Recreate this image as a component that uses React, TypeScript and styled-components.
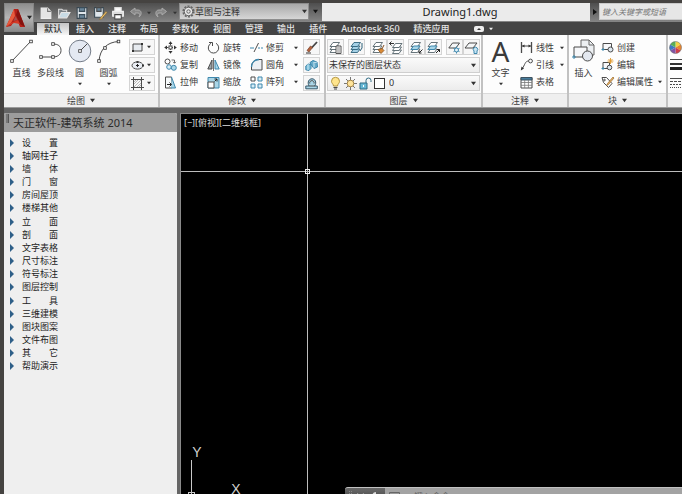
import React from "react";
import styled, { createGlobalStyle, css } from "styled-components";

const GlobalStyle = createGlobalStyle`
  * { box-sizing: border-box; }
  html, body { margin: 0; padding: 0; overflow: hidden; }
  body, button, input, select {
    font-family: "Noto Sans", "Noto Sans CJK SC", sans-serif;
    font-size: 9px;
    line-height: 12px;
    color: #3c3c3c;
  }
  button { border: 0; padding: 0; background: none; cursor: pointer; white-space: nowrap; }
  ul { list-style: none; margin: 0; padding: 0; }
  svg { display: block; flex: none; overflow: visible; }
`;

/* ---------- shell ---------- */

const Shell = styled.div`
  display: flex;
  flex-direction: column;
  height: 100vh;
  padding: 3px 0 0 4px;
  background: #454341;
`;

const Header = styled.header`
  display: flex;
  flex: none;
  background: #444;
`;

const AppButton = styled.button`
  display: flex;
  align-items: center;
  justify-content: center;
  gap: 2px;
  flex: none;
  width: 30px;
  height: 29px;
  background: linear-gradient(#8e8e8e, #b5b5b5 50%, #8b8b8b);
  border: 1px solid #858585;
`;

const HeaderRows = styled.div`
  flex: 1;
  min-width: 0;
`;

const TitleBar = styled.div`
  display: flex;
  height: 19px;
  background: linear-gradient(#4e4e4e, #858585);
`;

const QuickTools = styled.div`
  display: flex;
  align-items: center;
  gap: 4px;
  padding-left: 5px;
  width: 145px;
`;

const QuickButton = styled.button`
  display: flex;
  align-items: center;
  gap: 5px;
`;

const Workspace = styled.label`
  display: flex;
  align-items: center;
  width: 130px;
  height: 17px;
  padding: 0 1px 0 2px;
  background: linear-gradient(#a9a9a9, #d6d6d6);
  border: 1px solid #8d8d8d;
`;

const PlainSelect = styled.select`
  appearance: none;
  flex: 1;
  min-width: 0;
  border: 0;
  padding: 0;
  background: none;
  color: #333;
  line-height: 14px;
  outline: none;
`;

const MoreButton = styled.button`
  display: flex;
  align-items: center;
  justify-content: center;
  width: 13px;
  height: 17px;
`;

const DocTitle = styled.div`
  flex: 1;
  height: 18px;
  padding-left: 8px;
  background: #ebebeb;
  color: #222;
  font-size: 11px;
  line-height: 18px;
  text-align: center;
`;

const SearchToggle = styled.button`
  display: flex;
  align-items: center;
  justify-content: center;
  width: 9px;
  height: 17px;
`;

const SearchInput = styled.input`
  width: 83px;
  height: 17px;
  padding: 0 2px;
  border: 1px solid #c9c9c9;
  border-right: 0;
  border-radius: 0;
  background: #e6e6e6;
  font-size: 8px;
  font-style: italic;
  &::placeholder { color: #777; opacity: 1; }
`;

const Tabs = styled.nav`
  display: flex;
  align-items: flex-end;
  gap: 14px;
  height: 13px;
  padding-left: 3px;
`;

const Tab = styled.button<{ $active?: boolean }>`
  height: 12px;
  color: #e4e4e4;
  font-weight: 500;
  ${(p) =>
    p.$active &&
    css`
      padding: 0 7px;
      margin-right: -7px;
      background: linear-gradient(#c4c4c4, #f6f6f6);
      color: #333;
    `}
`;

const TabExtra = styled.button`
  display: flex;
  align-items: center;
  align-self: center;
  gap: 5px;
  margin-left: 10px;
`;

/* ---------- ribbon ---------- */

const Ribbon = styled.div`
  display: flex;
  flex: none;
  gap: 2px;
  background: #c2c2c2;
  border-bottom: 1px solid #9a9a9a;
`;

const PanelBox = styled.section<{ $width?: number }>`
  display: flex;
  flex-direction: column;
  flex: ${(p) => (p.$width ? `0 0 ${p.$width}px` : "1 1 0")};
  min-width: 0;
  background: #fdfdfd;
`;

const PanelBody = styled.div<{ $pad?: string }>`
  display: flex;
  justify-content: space-between;
  height: 58px;
  padding: ${(p) => p.$pad ?? "4px 3px 2px"};
`;

const PanelCaption = styled.button`
  display: flex;
  align-items: center;
  justify-content: center;
  gap: 5px;
  height: 14px;
  background: #efefef;
  border-top: 1px solid #dadada;
`;

const ToolGroup = styled.div`
  display: flex;
`;

const BigTool = styled.button`
  display: flex;
  flex-direction: column;
  align-items: center;
  width: 29px;
  height: 52px;
  gap: 3px;
`;

const BigLabel = styled.span`
  margin-top: 1px;
`;

const BigLetter = styled.span`
  height: 24px;
  color: #3a3a3a;
  font-family: "Noto Sans", sans-serif;
  font-size: 28px;
  line-height: 24px;
`;

const SmallStack = styled.div`
  display: flex;
  flex-direction: column;
  justify-content: space-between;
`;

const SmallButton = styled.button`
  display: flex;
  align-items: center;
  justify-content: center;
  width: 17px;
  height: 16px;
  background: #f7f7f7;
  border: 1px solid #d4d4d4;
`;

const SplitButton = styled(SmallButton)`
  width: 26px;
  justify-content: space-between;
  padding: 0 3px 0 1px;
`;

const ToolGrid = styled.div<{ $columns: string }>`
  display: grid;
  grid-template-columns: ${(p) => p.$columns};
  grid-template-rows: repeat(3, 1fr);
`;

const RowTool = styled.button`
  display: flex;
  align-items: center;
  gap: 3px;
`;

const RowText = styled.span`
  flex: 1;
  text-align: left;
`;

const LayerColumn = styled.div`
  display: flex;
  flex: 1;
  flex-direction: column;
  justify-content: space-between;
`;

const LayerTools = styled.div`
  display: flex;
  justify-content: space-between;
`;

const ButtonPair = styled.div`
  display: flex;
`;

const LayerField = styled.label`
  display: flex;
  align-items: center;
  gap: 2px;
  height: 16px;
  padding: 0 3px 0 1px;
  background: linear-gradient(#fafafa, #ececec);
  border: 1px solid #cfcfcf;
`;

const Swatch = styled.span`
  width: 11px;
  height: 11px;
  margin-right: 2px;
  background: #fff;
  border: 1px solid #333;
`;

/* ---------- work area ---------- */

const WorkArea = styled.main`
  display: flex;
  flex: 1;
  min-height: 0;
  gap: 3px;
  padding-top: 5px;
  background: #656565;
`;

const Palette = styled.aside`
  flex: 0 0 173px;
  background: #efefef;
  border-radius: 2px 2px 0 0;
  overflow: hidden;
`;

const PaletteHead = styled.h1`
  display: flex;
  gap: 4px;
  height: 19px;
  margin: 0;
  padding: 1px 2px;
  background: #9c9c9c;
  color: #2b2b2b;
  font-size: 11px;
  font-weight: 400;
  line-height: 17px;
`;

const Grip = styled.span`
  width: 3px;
  height: 9px;
  background: #777;
  border-right: 1px solid #555;
`;

const Menu = styled.ul`
  display: flex;
  flex-direction: column;
  justify-content: space-between;
  height: 237px;
  margin-top: 4px;
`;

const MenuButton = styled.button`
  display: flex;
  align-items: center;
  gap: 7px;
  height: 13px;
  padding-left: 6px;
  color: #222;
`;

const MenuLabel = styled.span`
  display: flex;
  justify-content: space-between;
  width: 36px;
`;

const Viewport = styled.section`
  position: relative;
  flex: 1;
  overflow: hidden;
  background: #000;
  border-top: 1px solid #8a8a8a;
  border-left: 1px solid #8a8a8a;
`;

const ViewLabel = styled.div`
  display: flex;
  padding: 3px 0 0 3px;
`;

const ViewButton = styled.button`
  color: #dedede;
`;

const Crosshair = styled.svg`
  position: absolute;
  inset: 0;
  width: 100%;
  height: 100%;
  pointer-events: none;
`;

const Ucs = styled.svg`
  position: absolute;
  left: 4px;
  bottom: 0;
`;

const CommandLine = styled.div`
  position: absolute;
  left: 164px;
  right: 0;
  bottom: -14px;
  display: flex;
  height: 21px;
  background: #a3a3a3;
  border-top: 1px solid #c2c2c2;
  border-radius: 3px 0 0 0;
  overflow: hidden;
`;

const CommandTools = styled.div`
  display: flex;
  gap: 4px;
  width: 40px;
  padding: 3px;
  background: linear-gradient(#696969, #333);
`;

const CommandInput = styled.input`
  flex: 1;
  min-width: 0;
  padding: 0 0 2px;
  border: 0;
  background: none;
  &::placeholder { color: #666; opacity: 1; }
`;

const CommandIcon = styled.div`
  padding: 4px 8px 0 4px;
`;

/* ---------- icons ---------- */

const Caret = ({ size = 5, color = "#333" }: { size?: number; color?: string }) => (
  <svg width={size} height={size} viewBox="0 0 6 6" aria-hidden="true">
    <path d="M0 1h6L3 5z" fill={color} />
  </svg>
);

const INK = "#4b4b4b";
const BLUE = "#3f88ad";
const SKY = "#a9d6e8";

const Ico = ({ size = 13, box = 13, children }: { size?: number; box?: number; children: React.ReactNode }) => (
  <svg width={size} height={size} viewBox={`0 0 ${box} ${box}`} fill="none" stroke={INK} strokeWidth="1" aria-hidden="true">
    {children}
  </svg>
);

const Node = ({ x, y }: { x: number; y: number }) => (
  <rect x={x - 1.3} y={y - 1.3} width="2.6" height="2.6" fill="#fff" stroke="#333" strokeWidth=".8" />
);

const Sheets = ({ tint = "#fff", line = "#56656c" }: { tint?: string; line?: string }) => (
  <g stroke={line} strokeWidth=".9" fill={tint}>
    <path d="M1 11.500L3.500 8H10L7.500 11.500z" />
    <path d="M1 8.500L3.500 5H10L7.500 8.500z" />
    <path d="M1 5.500L4 1.500h6.500L7.500 5.500z" />
  </g>
);

const big = {
  line: (
    <Ico size={24} box={24}>
      <path d="M2 22L21 2" /><Node x={2} y={22} /><Node x={21} y={2.500} />
    </Ico>
  ),
  polyline: (
    <Ico size={24} box={24}>
      <path d="M2 18h12c4 0 8-2 8-6.500S19 5 14 5" />
      <Node x={2} y={18} /><Node x={14} y={18} /><Node x={14} y={5} />
    </Ico>
  ),
  circle: (
    <Ico size={24} box={24}>
      <circle cx="12" cy="12" r="10.800" fill="#e4e9f2" stroke="#747c88" />
      <path d="M12 12l7.500-7.500" /><Node x={12} y={12} />
    </Ico>
  ),
  arc: (
    <Ico size={24} box={24}>
      <path d="M2 22C3 10 10 3 22 2.500" /><Node x={2} y={22} /><Node x={8} y={9} /><Node x={21.500} y={2.500} />
    </Ico>
  ),
  insert: (
    <Ico size={24} box={24}>
      <path d="M9 9V1h8l5 5v10h-6" fill="#eceff2" stroke="#666" />
      <path d="M17 1v5h5" stroke="#666" />
      <path d="M2 18V8h13v10z" fill="#f6f7f9" />
      <circle cx="15.500" cy="17" r="5" fill="#e3e8f0" />
      <path d="M0 18h4M2 16v4" stroke={BLUE} />
    </Ico>
  ),
};

const small = {
  rect: (
    <Ico>
      <path d="M2 3h9v7H2z" fill="#e7ebf0" />
      <path d="M1 9h2v2H1zM10 2h2v2h-2z" fill="#333" stroke="none" />
    </Ico>
  ),
  ellipse: <Ico><ellipse cx="6.500" cy="6.500" rx="5.500" ry="3.600" fill="#e9edf3" /><path d="M6.500 5v3M5 6.500h3" stroke="#222" /><path d="M5.500 2h2v2h-2zM11 5.500h2v2h-2z" fill="#333" stroke="none" /></Ico>,
  hatch: <Ico><path d="M2.500 0v13M10.500 0v13M0 2.500h13M0 10.500h13" /><path d="M3 5l2-2M3 7l4-4M3 10l7-7M6 10l4-4M8 10l2-2" stroke="#999" strokeWidth=".7" /></Ico>,
  move: <Ico><path d="M6.500 1v11M1 6.500h11" strokeDasharray="3.500 1" /><path d="M4.500 3l2-2.800 2 2.800zM4.500 10l2 2.800 2-2.800zM3 4.500L.2 6.500 3 8.500zM10 4.500l2.800 2-2.800 2z" fill="#333" stroke="none" /><rect x="5" y="5" width="3" height="3" fill="#fff" /></Ico>,
  rotate: <Ico><path d="M4 2.300A5.200 5.200 0 1 0 9 2.300" /><path d="M2 1.500h3.500V5" /></Ico>,
  trim: <Ico><path d="M0 7h4M8 7h2M11 7h2" stroke={BLUE} /><path d="M4 11L8.500 2" /></Ico>,
  copy: <Ico><circle cx="3.500" cy="3.500" r="2.500" /><circle cx="5" cy="9" r="2.300" stroke={BLUE} fill="#d8edf6" /><circle cx="9.800" cy="9.800" r="2.500" stroke={BLUE} fill={SKY} /><path d="M7.500 2h3v3M9 3.800l1.500 1.500L12 3.800" strokeWidth=".8" /></Ico>,
  mirror: <Ico><path d="M5 2v9H.8z" fill="#9ca5aa" /><path d="M8 2v9h4.200z" fill={SKY} stroke={BLUE} /><path d="M6.500 0v13" strokeWidth=".8" /></Ico>,
  fillet: <Ico><path d="M1.500 12V9C1.500 4 5 1.500 9 1.500h3V12z" fill="#edf0f4" /><path d="M1.500 9C1.500 4 5 1.500 9 1.500" stroke={BLUE} strokeWidth="1.300" /></Ico>,
  stretch: <Ico><path d="M1.500 1h6v11h-6z" fill="#f7fafb" /><path d="M7.500 1l4 11H7" stroke={BLUE} fill={SKY} /><path d="M3 8.500h4M5.500 6.500l2 2-2 2" stroke="#222" /></Ico>,
  scale: <Ico><path d="M1 1.500h11v10.500H1z" fill={SKY} stroke={BLUE} /><path d="M1 6h6v6H1z" fill="#fff" /><path d="M7.500 5.500l2.500-2.500M7.500 3H10v2.500" stroke="#222" /></Ico>,
  array: <Ico><path d="M1 1h4v4H1z" fill="#fff" /><path d="M8 1h4v4H8zM1 8h4v4H1zM8 8h4v4H8z" fill="#d8edf6" stroke={BLUE} /></Ico>,
  erase: <Ico><path d="M12 1L6.500 7" stroke="#444" strokeWidth="1.800" /><path d="M7.500 6.500L4 11 2 9.500 5.500 5z" fill="#b5623c" stroke="#743e28" strokeWidth=".7" /><path d="M1 12h5" stroke="#333" /></Ico>,
  explode: <Ico><path d="M.8 7L3 5l3 .5v4L4 11.500.8 10.800z" fill="#78bdd8" stroke={BLUE} /><path d="M5 3.500L8 1.500l4 1.500.5 5L9 9.500 7 7z" fill="#67abc9" stroke={BLUE} /><path d="M3 5v6M8 4l4-1M9 4.500v4" stroke="#e3f4fb" strokeWidth=".8" /></Ico>,
  offset: <Ico><path d="M.8 11.800h11.500V9H9.800C12 5 10 1.800 7 1.800S2 5 4 9H.8z" fill={SKY} stroke="#35576a" /><path d="M4 9h6M4.800 6.500a2.200 2.200 0 1 1 4.200 0" /></Ico>,
  linear: <Ico><path d="M1.500 1v11M11.500 1v11" strokeWidth="1.300" /><path d="M2 5h9" /><path d="M2 5l2.500-1.500v3zM11 5L8.500 3.500v3z" fill="#333" stroke="none" /></Ico>,
  leader: <Ico><circle cx="10.500" cy="3" r="1.900" /><path d="M8.500 3C5 3 5 7 2 11" /><path d="M.8 12.500l.7-4 2.500 2z" fill="#333" stroke="none" /></Ico>,
  table: <Ico><path d="M1 1.500h11v10.500H1z" fill="#fff" /><path d="M1 1.500h11V4H1z" fill="#477c9c" stroke="#3d5260" /><path d="M1 6.500h11M1 9.300h11M4.700 4v8M8.400 4v8" strokeWidth=".8" stroke="#777" /></Ico>,
  create: <Ico><path d="M2 2.500h8.500v6H2z" fill="#f7f8fa" /><circle cx="9.500" cy="8.500" r="2.500" fill="#dce7f0" /><path d="M.5 8.500h3M2 7v3" stroke={BLUE} /></Ico>,
  edit: <Ico><path d="M2 4.500h6.500v6H2z" fill="#f7f8fa" /><circle cx="8.500" cy="9.500" r="2.300" fill="#dce7f0" /><path d="M9.500 0v6M6.500 3h6M7.500 1l4 4M11.500 1l-4 4" stroke="#df982c" strokeWidth=".9" /><path d="M.5 10.500h3M2 9v3" stroke={BLUE} /></Ico>,
  attrs: <Ico><path d="M1 1.500h4.500l5.500 6-3.500 4-5-5z" fill="#fff" /><circle cx="3.500" cy="4" r=".8" /><path d="M12 1L6.500 7.500l-1 2 2-1L13 2z" fill="#ebb565" stroke="#95672c" strokeWidth=".7" /></Ico>,
  props: <Ico><Sheets /><path d="M7 5h5v7.500H7z" fill="#fff" stroke="#444" strokeWidth=".9" /><path d="M8 7h3M8 9h3M8 11h3" strokeWidth=".7" /></Ico>,
  current: <Ico><Sheets tint="#a5d1e6" line="#2f627b" /><path d="M12 2v5l-2 3" stroke="#2f627b" /></Ico>,
  match: <Ico><Sheets /><path d="M6 8.500l3 4 3-3-2-2z" fill="#d98a35" stroke="#87501f" strokeWidth=".8" /><path d="M10 8l2-4" stroke="#87501f" /></Ico>,
  previous: <Ico><g transform="translate(2.500 1)"><Sheets /></g><path d="M0 2.500h5M2.500.5l-2 2 2 2" stroke="#333" /></Ico>,
  isolate: <Ico><Sheets /><path d="M1 8.500L3.500 5H10L7.500 8.500z" fill={SKY} stroke={BLUE} /><path d="M12.500 8.500l-3.500 3.500M9 9.500V12h2.500" stroke="#222" /></Ico>,
  unisolate: <Ico><Sheets /><path d="M1 8.500L3.500 5H10L7.500 8.500z" fill={SKY} stroke={BLUE} /><path d="M9 12l3.500-3.500M10 8.500h2.500V11" stroke="#222" /></Ico>,
  freeze: <Ico><path d="M.8 7l3.700-5h7L8 7z" fill="#f5f7f8" /><path d="M8.500 5.500v7M5.500 7.300l6 3.400M11.500 7.300l-6 3.400" stroke={BLUE} /><circle cx="8.500" cy="9" r="2" fill="#e4f4fb" stroke={BLUE} /></Ico>,
  off: <Ico><path d="M0 7l4-5h8L8 7z" fill="#f5f7f8" /><path d="M9 10a2.200 2.200 0 1 1 3 0v2.500H9z" fill="#c7e5f4" stroke={BLUE} /></Ico>,
  bulb: <Ico><path d="M4.500 9C4.500 7 2.500 6.500 2.500 4.300a4 4 0 0 1 8 0C10.500 6.500 8.500 7 8.500 9z" fill="#ffe58d" stroke="#b49642" /><path d="M4.500 10.500h4M5 12h3" /></Ico>,
  sun: <Ico><path d="M6.500 0v13M0 6.500h13M2 2l9 9M11 2l-9 9" stroke="#777" /><circle cx="6.500" cy="6.500" r="3.300" fill="#ffe49a" stroke="#a58647" /></Ico>,
  lock: <Ico><path d="M1 6h7v6H1z" fill="#68b8d5" stroke="#306b83" /><path d="M7 6V3.500a2.500 2.500 0 0 1 5 0V5" stroke="#306b83" /><path d="M4.500 8v2" stroke="#fff" /></Ico>,
};

const quick = {
  blank: <Ico size={14}><path d="M2 2h6l3 3v6.500H2z" fill="#e5e5e5" stroke="#eee" /><path d="M8 2v3h3" stroke="#777" /></Ico>,
  open: <Ico size={14}><path d="M1.500 11V3h3l1 1H9v2" fill="#7b8287" stroke="#ddd" /><path d="M1.500 11L4 6h8l-3 5z" fill="#c8dbe5" stroke="#e6e6e6" /></Ico>,
  save: <Ico size={14}><path d="M2 1.500h9v10H2z" fill="#dfe6eb" stroke="#394751" /><path d="M4 1.500h5V5H4zM4 8h5v3.500H4z" fill="#688499" stroke="#3b4d5a" /></Ico>,
  saveAs: <Ico size={14}><path d="M1.500 1.500h8v9h-8z" fill="#dfe6eb" stroke="#394751" /><path d="M3.500 1.500h4V5h-4z" fill="#688499" /><path d="M12 5L7 11l-1 1.500 2-.5 5-6z" fill="#f0c46b" stroke="#86652e" strokeWidth=".6" /></Ico>,
  print: <Ico size={14}><path d="M3.500 1.500h6V5h-6z" fill="#fff" stroke="#ddd" /><path d="M1.500 5h10v4.500h-10z" fill="#ddd" stroke="#eee" /><path d="M3.500 8h6v4h-6z" fill="#fff" stroke="#444" /></Ico>,
  undo: <Ico size={13}><path d="M6 2L1.500 5.500 6 9V7h3c2 0 2 2 1 4 3-2 3-7-1-7H6z" fill="#888" stroke="#aaa" /></Ico>,
  redo: <Ico size={13}><path d="M7 2l4.500 3.500L7 9V7H4C2 7 2 9 3 11 0 9 0 4 4 4h3z" fill="#888" stroke="#aaa" /></Ico>,
  gear: (
    <Ico>
      <circle cx="6.500" cy="6.500" r="5.200" stroke="#666" strokeWidth="1.800" strokeDasharray="2 1.267" />
      <circle cx="6.500" cy="6.500" r="4.200" fill="#e8e8e8" stroke="#666" />
      <circle cx="6.500" cy="6.500" r="1.700" stroke="#666" />
    </Ico>
  ),
};

/* ---------- pieces ---------- */

const Big = ({ icon, label, drop }: { icon: React.ReactNode; label: string; drop?: boolean }) => (
  <BigTool>
    {icon}
    <BigLabel>{label}</BigLabel>
    {drop && <Caret size={4} />}
  </BigTool>
);

const Row = ({ icon, label, drop }: { icon: React.ReactNode; label: string; drop?: boolean }) => (
  <RowTool>
    {icon}
    <RowText>{label}</RowText>
    {drop && <Caret size={4} />}
  </RowTool>
);

const Panel = ({ title, width, pad, children }: { title: string; width?: number; pad?: string; children: React.ReactNode }) => (
  <PanelBox $width={width}>
    <PanelBody $pad={pad}>{children}</PanelBody>
    <PanelCaption aria-label={title || "特性"}>
      {title}
      {title && <Caret />}
    </PanelCaption>
  </PanelBox>
);

const tabs = ["默认", "插入", "注释", "布局", "参数化", "视图", "管理", "输出", "插件", "Autodesk 360", "精选应用"];

const menu = [
  "设 置", "轴网柱子", "墙 体", "门 窗", "房间屋顶", "楼梯其他", "立 面", "剖 面", "文字表格",
  "尺寸标注", "符号标注", "图层控制", "工 具", "三维建模", "图块图案", "文件布图", "其 它", "帮助演示",
];

export default function App() {
  return (
    <Shell>
      <GlobalStyle />
      <Header>
        <AppButton aria-label="应用程序菜单">
          <svg width="19" height="20" viewBox="0 0 19 20" aria-hidden="true">
            <path d="M8 1h4l7 18h-5l-2-5-5 1-2 3-5 1z" fill="#b52018" />
            <path d="M8 1l1 7-4 7-5 4z" fill="#e75b3d" />
            <path d="M12 1l7 18-5-3-4-9z" fill="#86130f" />
            <path d="M5 15l7-3 2 4-6-1-8 4z" fill="#d43a26" />
            <path d="M9.500 8l2 4-4 1z" fill="#a5504a" />
          </svg>
          <Caret color="#222" />
        </AppButton>
        <HeaderRows>
          <TitleBar>
            <QuickTools>
              <QuickButton aria-label="新建">{quick.blank}</QuickButton>
              <QuickButton aria-label="打开">{quick.open}</QuickButton>
              <QuickButton aria-label="保存">{quick.save}</QuickButton>
              <QuickButton aria-label="另存为">{quick.saveAs}</QuickButton>
              <QuickButton aria-label="打印">{quick.print}</QuickButton>
              <QuickButton aria-label="放弃">{quick.undo}<Caret size={4} /></QuickButton>
              <QuickButton aria-label="重做">{quick.redo}<Caret size={4} /></QuickButton>
            </QuickTools>
            <Workspace>
              {quick.gear}
              <PlainSelect aria-label="工作空间"><option>草图与注释</option></PlainSelect>
              <Caret />
            </Workspace>
            <MoreButton aria-label="自定义"><Caret color="#111" /></MoreButton>
            <DocTitle>Drawing1.dwg</DocTitle>
            <SearchToggle aria-label="展开搜索">
              <svg width="4" height="6" viewBox="0 0 4 6"><path d="M0 0l4 3-4 3z" fill="#111" /></svg>
            </SearchToggle>
            <SearchInput aria-label="搜索" placeholder="键入关键字或短语" />
          </TitleBar>
          <Tabs>
            {tabs.map((t, i) => <Tab key={t} $active={i === 0}>{t}</Tab>)}
            <TabExtra aria-label="功能区显示">
              <svg width="10" height="6" viewBox="0 0 10 6"><rect width="10" height="6" rx="2" fill="#eee" /><path d="M3 4l2-2 2 2z" fill="#333" /></svg>
              <Caret size={4} color="#eee" />
            </TabExtra>
          </Tabs>
        </HeaderRows>
      </Header>

      <Ribbon>
        <Panel title="绘图" width={154}>
          <ToolGroup>
            <Big icon={big.line} label="直线" />
            <Big icon={big.polyline} label="多段线" />
            <Big icon={big.circle} label="圆" drop />
            <Big icon={big.arc} label="圆弧" drop />
          </ToolGroup>
          <SmallStack>
            <SplitButton aria-label="矩形">{small.rect}<Caret size={4} /></SplitButton>
            <SplitButton aria-label="椭圆">{small.ellipse}<Caret size={4} /></SplitButton>
            <SplitButton aria-label="图案填充">{small.hatch}<Caret size={4} /></SplitButton>
          </SmallStack>
        </Panel>

        <Panel title="修改" width={164} pad="4px 4px 2px">
          <ToolGrid $columns="43px 43px 48px">
            <Row icon={small.move} label="移动" />
            <Row icon={small.rotate} label="旋转" />
            <Row icon={small.trim} label="修剪" drop />
            <Row icon={small.copy} label="复制" />
            <Row icon={small.mirror} label="镜像" />
            <Row icon={small.fillet} label="圆角" drop />
            <Row icon={small.stretch} label="拉伸" />
            <Row icon={small.scale} label="缩放" />
            <Row icon={small.array} label="阵列" drop />
          </ToolGrid>
          <SmallStack>
            <SmallButton aria-label="删除">{small.erase}</SmallButton>
            <SmallButton aria-label="分解">{small.explode}</SmallButton>
            <SmallButton aria-label="偏移">{small.offset}</SmallButton>
          </SmallStack>
        </Panel>

        <Panel title="图层" width={155} pad="4px 1px 2px">
          <LayerColumn>
            <LayerTools>
              <SmallButton aria-label="图层特性">{small.props}</SmallButton>
              <SmallButton aria-label="置为当前">{small.current}</SmallButton>
              <ButtonPair>
                <SmallButton aria-label="匹配">{small.match}</SmallButton>
                <SmallButton aria-label="上一个">{small.previous}</SmallButton>
              </ButtonPair>
              <ButtonPair>
                <SmallButton aria-label="隔离">{small.isolate}</SmallButton>
                <SmallButton aria-label="取消隔离">{small.unisolate}</SmallButton>
              </ButtonPair>
              <ButtonPair>
                <SmallButton aria-label="冻结">{small.freeze}</SmallButton>
                <SmallButton aria-label="关闭">{small.off}</SmallButton>
              </ButtonPair>
            </LayerTools>
            <LayerField>
              <PlainSelect aria-label="图层状态"><option>未保存的图层状态</option></PlainSelect>
              <Caret />
            </LayerField>
            <LayerField>
              {small.bulb}{small.sun}{small.lock}<Swatch />
              <PlainSelect aria-label="图层"><option>0</option></PlainSelect>
              <Caret />
            </LayerField>
          </LayerColumn>
        </Panel>

        <Panel title="注释" width={84}>
          <Big icon={<BigLetter>A</BigLetter>} label="文字" drop />
          <ToolGrid $columns="44px">
            <Row icon={small.linear} label="线性" drop />
            <Row icon={small.leader} label="引线" drop />
            <Row icon={small.table} label="表格" />
          </ToolGrid>
        </Panel>

        <Panel title="块" width={97} pad="4px 4px 2px 0">
          <Big icon={big.insert} label="插入" />
          <ToolGrid $columns="61px">
            <Row icon={small.create} label="创建" />
            <Row icon={small.edit} label="编辑" />
            <Row icon={small.attrs} label="编辑属性" drop />
          </ToolGrid>
        </Panel>

        <Panel title="" pad="4px 1px 2px">
          <ToolGrid $columns="13px">
            <RowTool aria-label="颜色">
              <Ico>
                <g stroke="none">
                  <path d="M6.500 6.500V.5a6 6 0 0 1 5.200 3z" fill="#f4d444" />
                  <path d="M6.500 6.500l5.200-3a6 6 0 0 1 0 6z" fill="#e8852f" />
                  <path d="M6.500 6.500l5.200 3a6 6 0 0 1-5.200 3z" fill="#cf3d4b" />
                  <path d="M6.500 6.500v6a6 6 0 0 1-5.200-3z" fill="#8054a4" />
                  <path d="M6.500 6.500l-5.200 3a6 6 0 0 1 0-6z" fill="#3f78c4" />
                  <path d="M6.500 6.500l-5.200-3a6 6 0 0 1 5.200-3z" fill="#58ae57" />
                </g>
                <circle cx="6.500" cy="6.500" r="6" stroke="#777" strokeWidth=".6" />
              </Ico>
            </RowTool>
            <RowTool aria-label="线宽">
              <Ico><path d="M1 1.500h12" /><path d="M1 6h12" strokeWidth="2" stroke="#333" /><path d="M1 10.500h12" strokeWidth="3" stroke="#222" /></Ico>
            </RowTool>
            <RowTool aria-label="线型">
              <Ico><path d="M1 2.500h12" /><path d="M1 5.500h12" strokeDasharray="3 1" /><path d="M1 8.500h12" strokeDasharray="2 1" /><path d="M1 11.500h12" strokeDasharray="1 1" /></Ico>
            </RowTool>
          </ToolGrid>
        </Panel>
      </Ribbon>

      <WorkArea>
        <Palette>
          <PaletteHead><Grip />天正软件-建筑系统 2014</PaletteHead>
          <Menu>
            {menu.map((m) => (
              <li key={m}>
                <MenuButton>
                  <svg width="5" height="8" viewBox="0 0 5 8" aria-hidden="true"><path d="M0 0l4 4-4 4z" fill="#2e5f88" /></svg>
                  <MenuLabel>{m.split(" ").map((part) => <span key={part}>{part}</span>)}</MenuLabel>
                </MenuButton>
              </li>
            ))}
          </Menu>
        </Palette>
        <Viewport>
          <ViewLabel>
            <ViewButton>[−]</ViewButton>
            <ViewButton>[俯视]</ViewButton>
            <ViewButton>[二维线框]</ViewButton>
          </ViewLabel>
          <Crosshair aria-hidden="true">
            <g stroke="#bdbdbd" fill="none" shapeRendering="crispEdges">
              <path d="M126.500 0V2000M0 57.500H4000" />
              <rect x="124.500" y="55.500" width="4" height="4" stroke="#eee" />
            </g>
          </Crosshair>
          <Ucs width="60" height="56" viewBox="0 0 60 56" stroke="#c9c9c9" fill="none">
            <path d="M6.500 22V56M3.500 56v-1.500h6V56" shapeRendering="crispEdges" />
            <g stroke="none" fill="#d0d0d0" fontFamily="Liberation Sans, sans-serif" fontSize="14" textAnchor="middle">
              <text x="12" y="19">Y</text>
              <text x="51" y="56">X</text>
            </g>
          </Ucs>
          <CommandLine>
            <CommandTools>
              <svg width="34" height="14" viewBox="0 0 34 14" stroke="#ddd" fill="none" aria-hidden="true">
                <path d="M1.500 0v12M3.500 0v12" stroke="#888" strokeDasharray="1 1" />
                <path d="M9 3l7 7M16 3l-7 7" strokeWidth="2" />
                <path d="M23 10l5-5M28 2a3 3 0 1 0 3 4" strokeWidth="2" />
              </svg>
            </CommandTools>
            <CommandIcon>
              <svg width="17" height="9" viewBox="0 0 17 9" aria-hidden="true">
                <path d="M.5.5h10v8H.5zM.5 2.500h10" stroke="#666" fill="#999" />
                <path d="M13 3h4l-2 3z" fill="#666" />
              </svg>
            </CommandIcon>
            <CommandInput aria-label="命令行" placeholder="键入命令" />
          </CommandLine>
        </Viewport>
      </WorkArea>
    </Shell>
  );
}
